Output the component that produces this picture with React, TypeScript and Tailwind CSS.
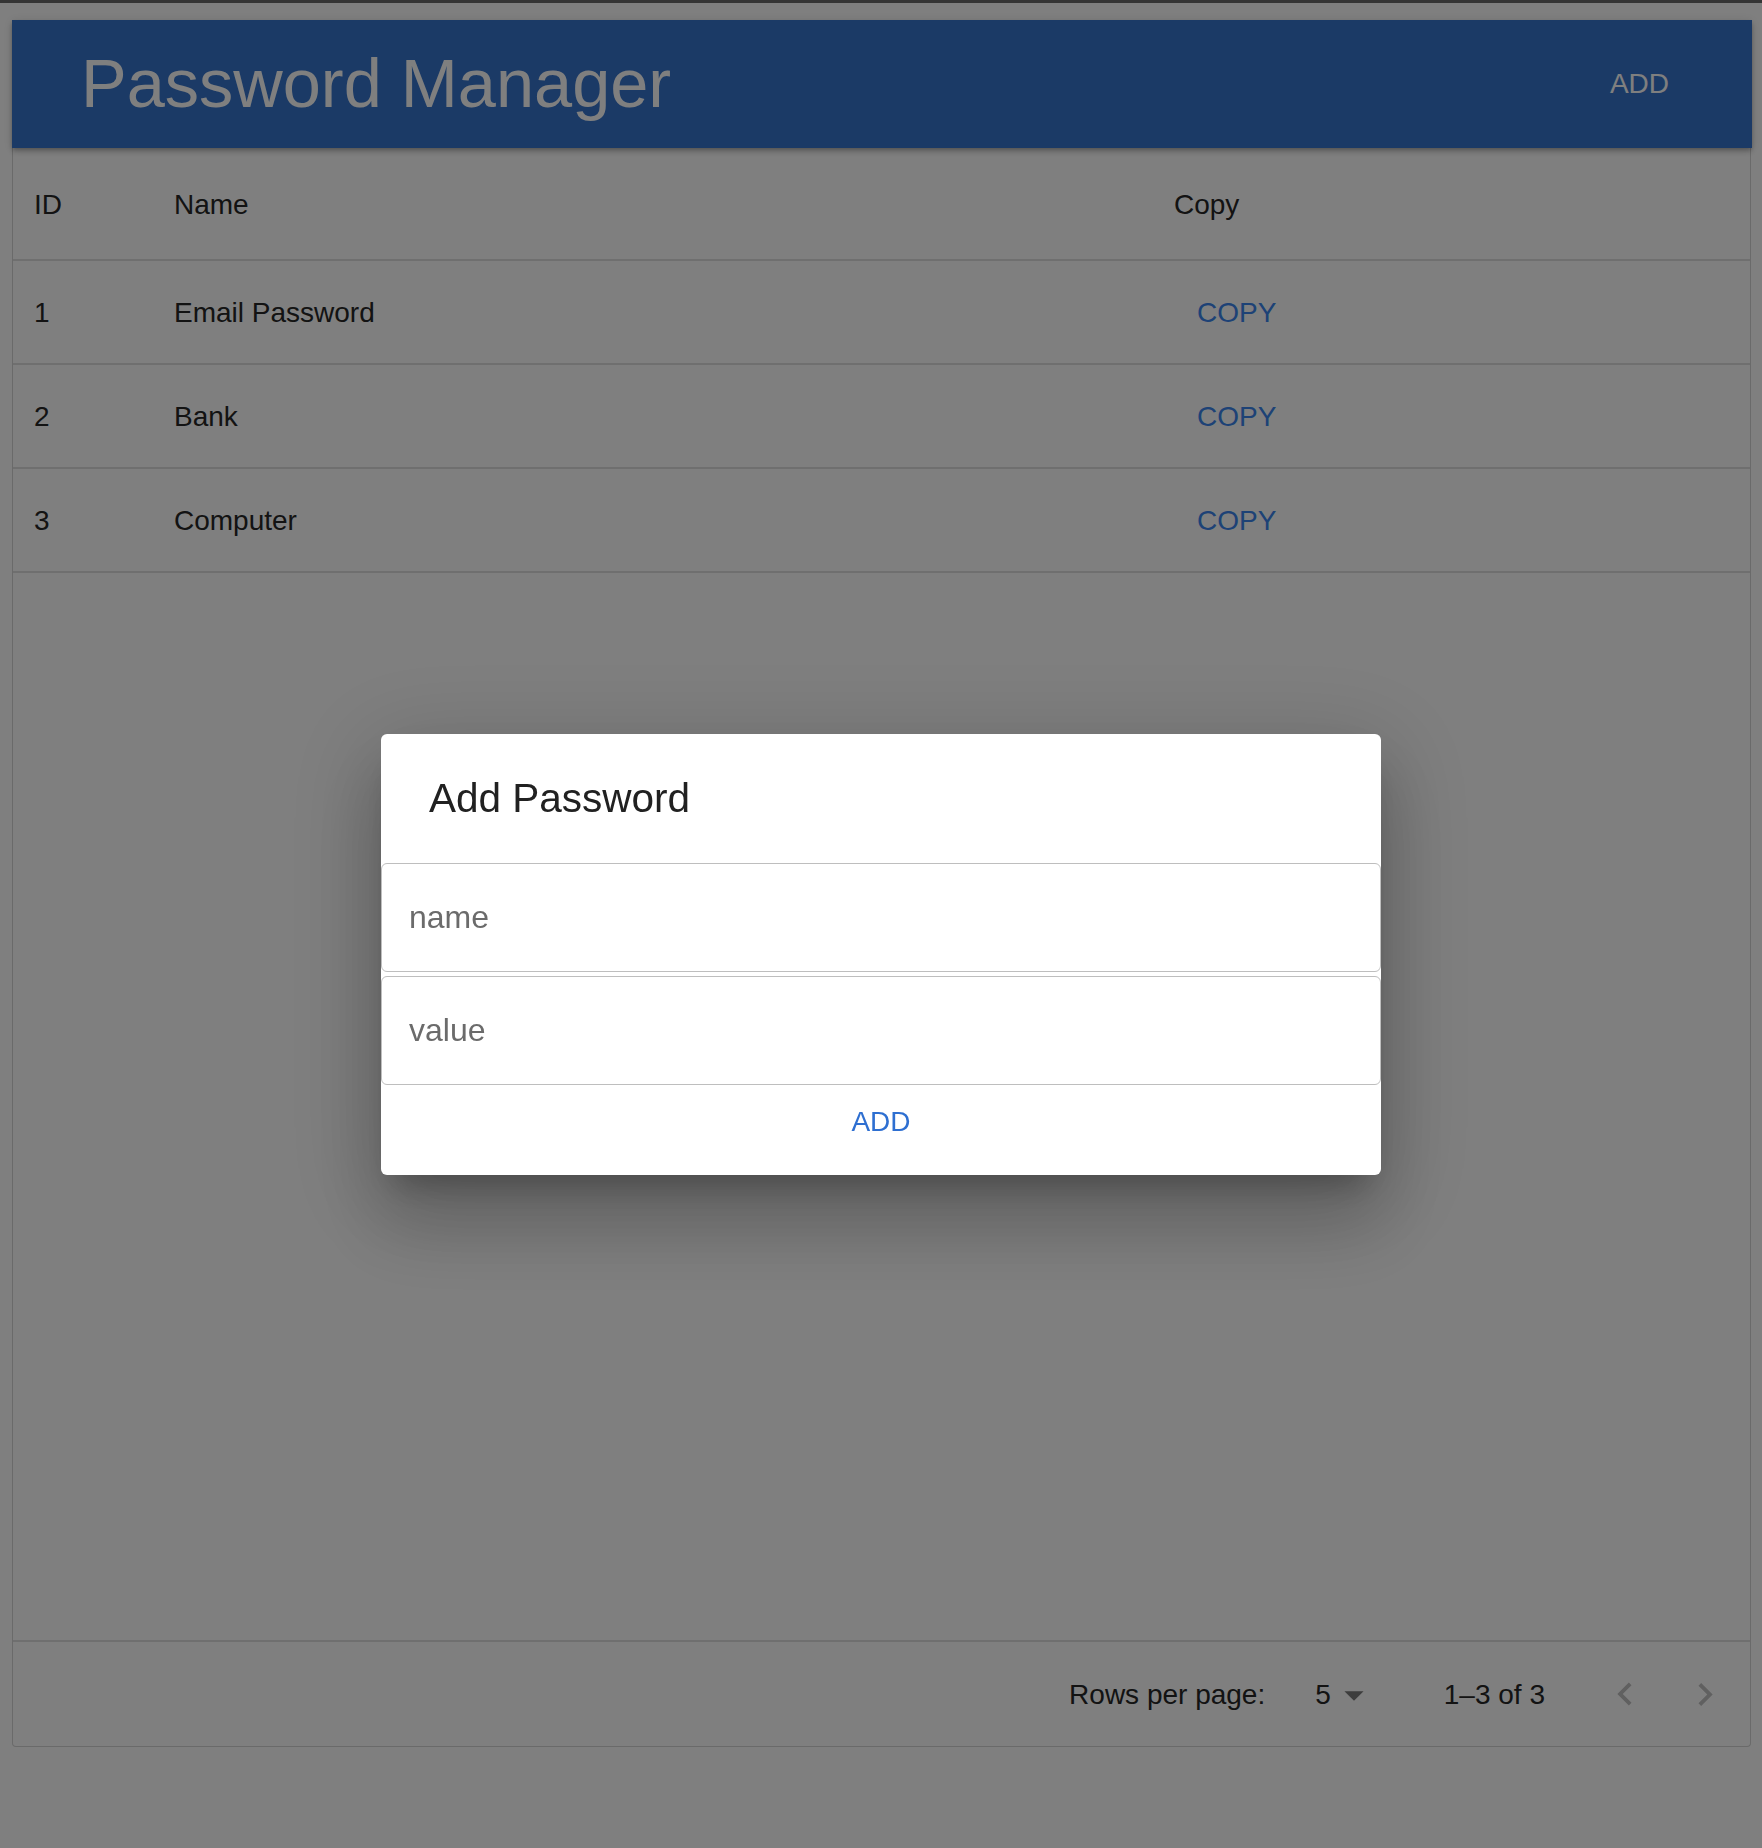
import React from "react";

const rows = [
  { id: 1, name: "Email Password" },
  { id: 2, name: "Bank" },
  { id: 3, name: "Computer" },
];

function Cells({ id, name, copy }: { id: React.ReactNode; name: React.ReactNode; copy: React.ReactNode }) {
  return (
    <div className="flex items-center pl-[21px] pt-[2px]">
      <div className="w-[140px] shrink-0">{id}</div>
      <div className="w-[1000px] shrink-0">{name}</div>
      <div className="flex-1">{copy}</div>
    </div>
  );
}

export default function App() {
  return (
    <div
      className="relative min-h-screen bg-white text-[28px] text-[#262626]"
      style={{ fontFamily: '"Liberation Sans", Arial, sans-serif' }}
    >
      <div className="h-[3px] bg-[#6b6b6b]" />

      <div className="pl-[12px] pr-[10px] pt-[17px]">
        {/* App bar */}
        <header className="relative z-10 flex h-[128px] items-center justify-between bg-[#3674cc] pl-[69px] pr-[83px] text-white shadow-[0_2px_4px_-1px_rgba(0,0,0,0.2),0_4px_5px_0_rgba(0,0,0,0.14),0_1px_10px_0_rgba(0,0,0,0.12)]">
          <h1 className="text-[68.5px] leading-none">Password Manager</h1>
          <button className="text-[28px] uppercase leading-none">Add</button>
        </header>

        {/* Table */}
        <div className="mr-[1px] flex h-[1599px] flex-col rounded-b-[4px] border border-t-0 border-[#d4d4d4]">
          <div className="flex h-[113px] flex-col justify-center border-b-2 border-[#dedede]">
            <Cells id="ID" name="Name" copy="Copy" />
          </div>
          {rows.map((r) => (
            <div key={r.id} className="flex h-[104px] flex-col justify-center border-b-2 border-[#dedede]">
              <Cells
                id={r.id}
                name={r.name}
                copy={<button className="px-[23px] uppercase text-[#3a84ec]">Copy</button>}
              />
            </div>
          ))}
          <div className="flex-1" />
          <div className="flex h-[106px] items-center justify-end border-t-2 border-[#dedede] pr-[22px] pt-[2px]">
            <span>Rows per page:</span>
            <div className="ml-[50px] flex items-center">
              <span>5</span>
              <svg viewBox="0 0 24 24" className="h-[46px] w-[46px] fill-[#7a7a7a]">
                <path d="M7 10l5 5 5-5z" />
              </svg>
            </div>
            <span className="ml-[67px]">1–3 of 3</span>
            <svg viewBox="0 0 24 24" className="ml-[57px] h-[46px] w-[46px] fill-[#c0c0c0]">
              <path d="M15.41 16.09l-4.58-4.59 4.58-4.59L14 5.5l-6 6 6 6z" />
            </svg>
            <svg viewBox="0 0 24 24" className="ml-[34px] h-[46px] w-[46px] fill-[#c0c0c0]">
              <path d="M8.59 16.34l4.58-4.59-4.58-4.59L10 5.75l6 6-6 6z" />
            </svg>
          </div>
        </div>
      </div>

      {/* Dialog */}
      <div className="fixed inset-0 z-20 flex items-start justify-center bg-black/50 pt-[734px]">
        <div className="w-[1000px] overflow-hidden rounded-[6px] bg-white shadow-[0_22px_30px_-14px_rgba(0,0,0,0.25),0_48px_76px_6px_rgba(0,0,0,0.16),0_18px_92px_16px_rgba(0,0,0,0.14)]">
          <h2 className="pb-[41px] pl-[48px] pt-[40px] text-[40.5px] leading-[48px] text-[#212121]">Add Password</h2>
          <div className="flex flex-col gap-[4px]">
            <input
              placeholder="name"
              className="h-[109px] w-full rounded-[6px] border-[1.5px] border-[#bebebe] pl-[27px] text-[32px] outline-none placeholder:text-[#6b6b6b]"
            />
            <input
              placeholder="value"
              className="h-[109px] w-full rounded-[6px] border-[1.5px] border-[#bebebe] pl-[27px] text-[32px] outline-none placeholder:text-[#6b6b6b]"
            />
          </div>
          <div className="flex justify-center pb-[40px] pt-[24px]">
            <button className="text-[28px] uppercase leading-[26px] text-[#2e6fd1]">Add</button>
          </div>
        </div>
      </div>
    </div>
  );
}
